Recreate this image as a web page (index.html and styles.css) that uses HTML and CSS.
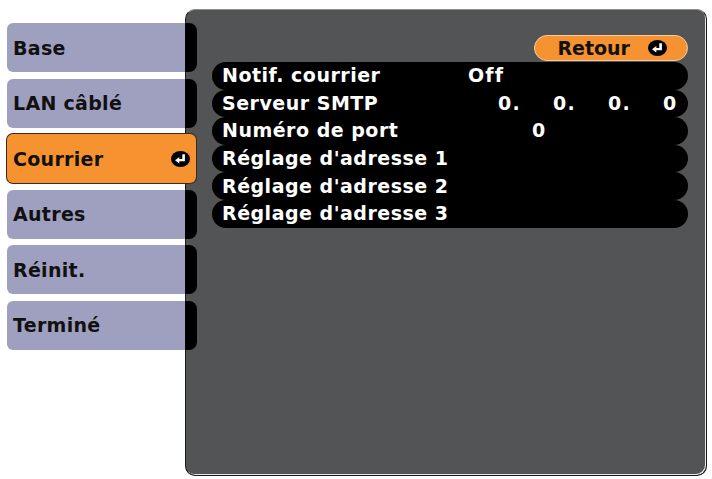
FILE: index.html
```html
<!DOCTYPE html>
<html lang="fr">
<head>
<meta charset="utf-8">
<title>Courrier</title>
<link rel="stylesheet" href="styles.css">
</head>
<body>
<div class="screen">
  <nav class="tabs">
    <div class="tab">Base</div>
    <div class="tab">LAN câblé</div>
    <div class="tab active">Courrier
      <svg class="enter" viewBox="0 0 16 16" preserveAspectRatio="none"><circle cx="8" cy="8" r="8" fill="#000"/><path d="M10.6 3.2V9.2H6.2" fill="none" stroke="#fff" stroke-width="2.2"/><path d="M3.4 9.2L7 5.9V12.5Z" fill="#fff"/></svg>
    </div>
    <div class="tab">Autres</div>
    <div class="tab">Réinit.</div>
    <div class="tab">Terminé</div>
  </nav>
  <section class="panel">
    <div class="top">
      <div class="back">Retour
        <svg class="enter" viewBox="0 0 16 16" preserveAspectRatio="none"><circle cx="8" cy="8" r="8" fill="#000"/><path d="M10.6 3.2V9.2H6.2" fill="none" stroke="#fff" stroke-width="2.2"/><path d="M3.4 9.2L7 5.9V12.5Z" fill="#fff"/></svg>
      </div>
    </div>
    <ul class="rows">
      <li class="row"><span class="label">Notif. courrier</span><span class="val">Off</span></li>
      <li class="row"><span class="label">Serveur SMTP</span><span class="val ip"><span class="oct">0.</span><span class="oct">0.</span><span class="oct">0.</span><span class="oct">0</span></span></li>
      <li class="row"><span class="label">Numéro de port</span><span class="val port">0</span></li>
      <li class="row"><span class="label">Réglage d'adresse 1</span><span class="val"></span></li>
      <li class="row"><span class="label">Réglage d'adresse 2</span><span class="val"></span></li>
      <li class="row"><span class="label">Réglage d'adresse 3</span><span class="val"></span></li>
    </ul>
  </section>
</div>
</body>
</html>
```

FILE: styles.css
```css
html, body {
  margin: 0;
  padding: 0;
  background: #ffffff;
}

body {
  font-family: "DejaVu Sans", "Noto Sans", sans-serif;
  font-weight: bold;
}

.screen {
  display: flex;
  align-items: flex-start;
  padding: 9px 0 0 7px;
}

.tabs {
  position: relative;
  z-index: 2;
  width: 178px;
  margin-top: 14px;
  display: flex;
  flex-direction: column;
  gap: 6.6px;
}

.tab {
  position: relative;
  box-sizing: border-box;
  width: 178px;
  height: 49px;
  display: flex;
  align-items: center;
  justify-content: space-between;
  padding: 0 6px;
  background: #9f9fc0;
  color: #111;
  font-size: 19px;
  letter-spacing: 0.3px;
  border-radius: 6px 0 0 6px;
}

.tab::after {
  content: "";
  position: absolute;
  left: 100%;
  top: 0;
  width: 12px;
  height: 100%;
  background: #000;
  border-radius: 0 8px 8px 0;
}

.tab.active {
  width: 189px;
  background: #f6922f;
  border-radius: 6px;
  box-shadow: 0 0 0 1px #3b2a18;
}

.tab.active::after {
  display: none;
}

.enter {
  display: block;
  flex: none;
  width: 19px;
  height: 16px;
}

.panel {
  box-sizing: border-box;
  width: 522px;
  height: 467px;
  background: #535455;
  border: 1px solid #1c1c1c;
  border-top-color: #8c8c8c;
  border-radius: 10px;
  box-shadow: inset -1px -1px 0 #e6e6e6;
  padding: 25px 18px 0 26px;
}

.top {
  display: flex;
  justify-content: flex-end;
}

.back {
  box-sizing: border-box;
  width: 154px;
  height: 26px;
  display: flex;
  align-items: center;
  justify-content: flex-end;
  gap: 18px;
  padding-right: 20px;
  background: #f6922f;
  border: 1px solid #f7c9a0;
  border-radius: 13px;
  color: #111;
  font-size: 19px;
}

.rows {
  list-style: none;
  margin: 1px 0 0;
  padding: 0;
}

.row {
  display: flex;
  align-items: center;
  height: 27.6px;
  padding-left: 10px;
  background: #000;
  border-radius: 14px;
  color: #fff;
  font-size: 19px;
  letter-spacing: 0.5px;
  line-height: 1;
}

.label {
  width: 246px;
  flex: none;
}

.val {
  letter-spacing: 1.2px;
}

.ip {
  display: flex;
  padding-left: 30px;
}

.oct {
  width: 55px;
}

.port {
  padding-left: 64px;
}
```
